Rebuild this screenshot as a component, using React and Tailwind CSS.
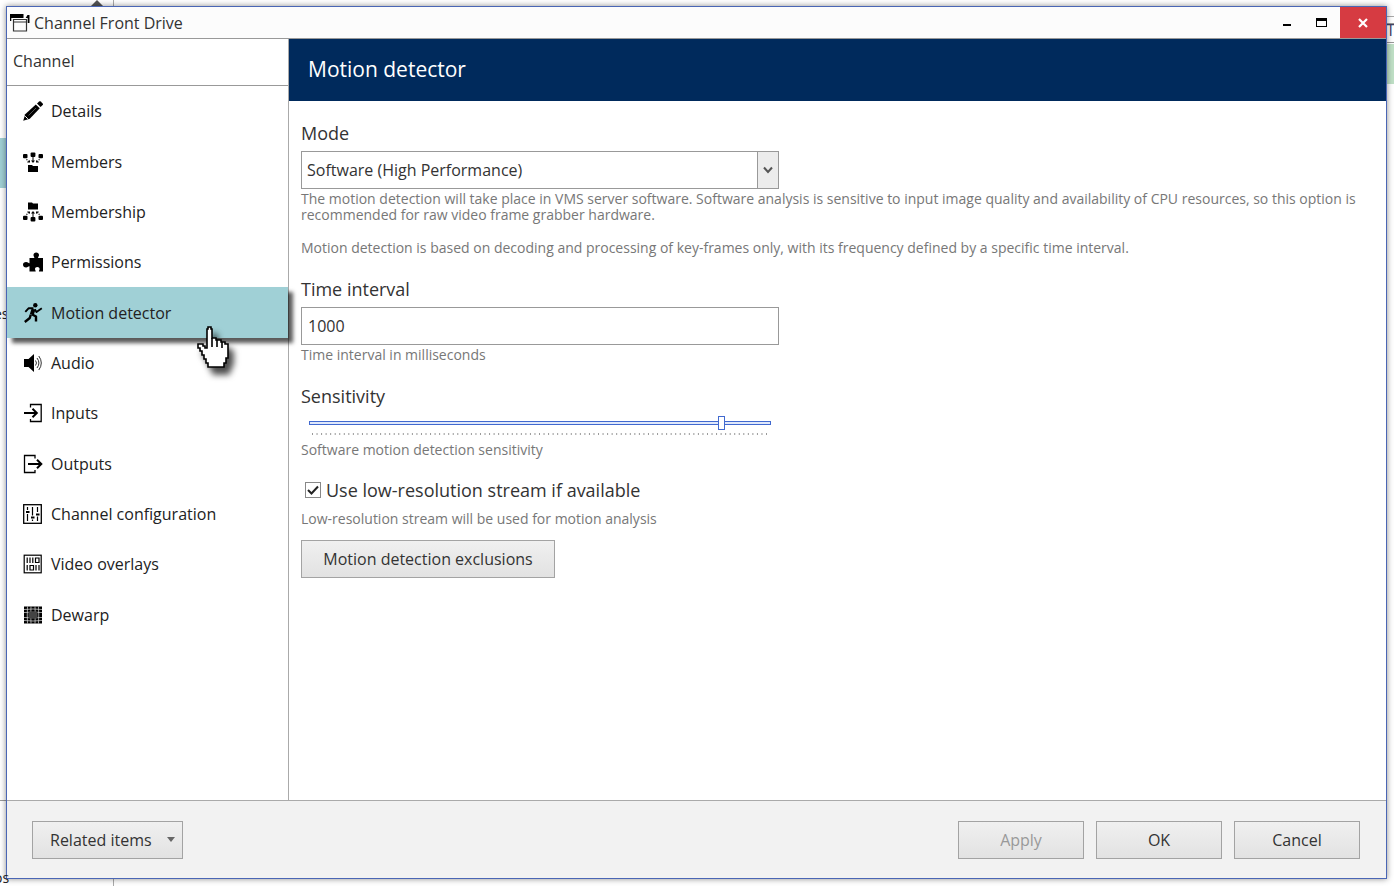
import React, { useState } from 'react';

const Svg = ({ children }) => (
  <svg viewBox="0 0 20 20" className="h-5 w-5 shrink-0" fill="currentColor" aria-hidden="true">
    {children}
  </svg>
);

const PencilIcon = () => (
  <Svg>
    <path d="M14 2.600 16.200.5c.5-.4 1-.4 1.500 0l2 2c.4.5.4 1 0 1.500l-2.200 2.100z" />
    <path d="M12.800 3.400 16.800 7.200 6.800 17.800.2 19.800 2.200 13.200z" />
    <path d="M2.200 15.200 4.800 17.800" stroke="#fff" strokeWidth="1" />
    <path d="M5.500 14.500 13 7" stroke="#666" strokeWidth="0.800" />
  </Svg>
);

const TreeIcon = ({ flip }) => (
  <Svg>
    <g transform={flip ? 'matrix(1 0 0 -1 0 20)' : undefined}>
      <rect x="0" y="2" width="4.500" height="4.300" rx="1" />
      <rect x="7.600" y="0.500" width="4.800" height="4.500" rx="1" />
      <rect x="15.500" y="2" width="4.500" height="4.300" rx="1" />
      <path d="M10 5v4" stroke="currentColor" strokeWidth="1" />
      <path d="M3.500 7.300l2 2.200M16.500 7.300l-2 2.200" stroke="currentColor" strokeWidth="1.200" strokeDasharray="1.200 0.800" />
      <path d="M8 8.500h4l-2 2.600zM4 10.500h3V8zM16 10.500h-3V8z" />
    </g>
    {flip ? <path d="M5 0.500h4l1 1H15v6H5z" /> : <path d="M5 13h4l1 1H15v6H5z" />}
  </Svg>
);

const PuzzleIcon = () => (
  <Svg>
    <path d="M6.500 6h4.800c.3-.9-.8-1.400-.8-3 0-1.400 1-2.500 2.700-2.500S16 1.600 16 3c0 1.600-1.200 2.100-.9 3H20v13.500h-4c-.4-1 .6-1.500.6-2.600 0-1.200-.9-2-2.300-2s-2.300.8-2.300 2c0 1.100 1 1.600.6 2.600H6.500v-5.200c-1-.3-1.500 1.100-3.400 1.100C1.200 15.400 0 14.300 0 12.700s1.200-2.600 3.100-2.600c1.900 0 2.400 1.400 3.400 1.100z" />
  </Svg>
);

const RunnerIcon = () => (
  <Svg>
    <circle cx="12.300" cy="2.300" r="2.200" />
    <g fill="none" stroke="currentColor" strokeLinejoin="round">
      <path d="M10.500 6.200 8.800 11.500" strokeWidth="4" />
      <path d="M10.500 5.300H5.500L2.300 8.800" strokeWidth="1.900" />
      <path d="M11.800 6.200 13.500 9 18.800 5.200" strokeWidth="1.900" />
      <path d="M8.800 11.200 13 13.500 13 18.500" strokeWidth="2.400" />
      <path d="M7.800 11.500 6.800 15 1.800 19" strokeWidth="2.400" />
    </g>
  </Svg>
);

const AudioIcon = () => (
  <Svg>
    <path d="M1 6h4.500L11 1v18l-5.500-5H1z" />
    <path
      d="M12.500 7.500q2 2.500 0 5M14 5q3.800 5 0 10M15.800 3q5 7 0 14"
      fill="none"
      stroke="currentColor"
      strokeWidth="1"
      opacity="0.800"
    />
  </Svg>
);

const InputIcon = () => (
  <Svg>
    <path d="M7.500 4.500V1.500h10.700v17H7.500v-2.500" fill="none" stroke="currentColor" strokeWidth="1.300" />
    <path d="M1 10h12M9.500 5.800l4.300 4.200-4.300 4.200" fill="none" stroke="currentColor" strokeWidth="2" />
  </Svg>
);

const OutputIcon = () => (
  <Svg>
    <path d="M12 4.500V1.500H1.500v17H12v-2.500" fill="none" stroke="currentColor" strokeWidth="1.300" />
    <path d="M5 10h12.500M14 5.800l4.300 4.200-4.300 4.200" fill="none" stroke="currentColor" strokeWidth="2" />
  </Svg>
);

const SlidersIcon = () => (
  <Svg>
    <rect x="0.700" y="0.700" width="17.600" height="18.600" fill="none" stroke="currentColor" strokeWidth="1.300" />
    <path d="M4.500 3v3M4.500 10v7M9.500 3v8.500M9.500 15.500v1.500M14.500 3v5M14.500 12.500v4.500" stroke="currentColor" strokeWidth="1.200" />
    <path d="M3 7h3.500v2H3zM8 12.500h3.500v2H8zM13 9.500h3.500v2H13z" />
  </Svg>
);

const OverlayIcon = () => (
  <Svg>
    <rect x="1.200" y="1.200" width="17" height="17.600" fill="none" stroke="currentColor" strokeWidth="1.200" />
    <path
      d="M4.200 3.500v5.500M7 3.500v5.500M9.800 3.500v5.500M12.500 4h3.500v4.500h-3.500zM4.200 11v5.500M7 11.500h3.500V16H7zM13 11v5.500M16 11v5.500"
      fill="none"
      stroke="currentColor"
      strokeWidth="1.200"
    />
  </Svg>
);

const DewarpIcon = () => (
  <Svg>
    <rect x="1" y="1.500" width="18" height="17" />
    <path
      d="M1 4.500q9-1 18 0M1 7.500q9-.5 18 0M1 12.500q9 .5 18 0M1 15.500q9 1 18 0M4.500 1.500q-.5 8.500 0 17M8 1.500q-.5 8.500 0 17M12 1.500q.5 8.500 0 17M15.500 1.500q.5 8.500 0 17"
      fill="none"
      stroke="#ddd"
      strokeWidth="0.700"
    />
    <rect x="5.500" y="6.500" width="9" height="7" fill="#444" />
  </Svg>
);

const WindowIcon = () => (
  <svg viewBox="0 0 20 18" className="h-[18px] w-5 shrink-0" aria-hidden="true">
    <path d="M0 0h13.500v4H1.300v3H0zM17.500 1h2v8h-1.800V4h-2z" />
    <path d="M3.500 5.500h13V17h-13zM3.500 8h13" fill="none" stroke="#333" strokeWidth="1.200" />
  </svg>
);

const HandCursor = () => (
  <svg
    viewBox="0 0 34 44"
    className="pointer-events-none absolute top-[38px] left-[190px] z-20 h-11 w-[34px] drop-shadow-[5px_7px_3px_rgba(0,0,0,0.7)]"
    aria-hidden="true"
  >
    <path
      d="M11 2h3v2h1v9h4v2h5v2h4v2h3v14h-2v5h-2v4H11v-4H9v-4H7v-4H5v-4H3v-3H1v-4h5v2h2v2h2V4h1z"
      fill="#fff"
      stroke="#000"
      strokeWidth="1.600"
    />
    <path d="M15 13v9M20 15v7M25 17v6" stroke="#000" strokeWidth="1.600" />
  </svg>
);

const navItems = [
  { label: 'Details', icon: <PencilIcon /> },
  { label: 'Members', icon: <TreeIcon /> },
  { label: 'Membership', icon: <TreeIcon flip /> },
  { label: 'Permissions', icon: <PuzzleIcon /> },
  { label: 'Motion detector', icon: <RunnerIcon /> },
  { label: 'Audio', icon: <AudioIcon /> },
  { label: 'Inputs', icon: <InputIcon /> },
  { label: 'Outputs', icon: <OutputIcon /> },
  { label: 'Channel configuration', icon: <SlidersIcon /> },
  { label: 'Video overlays', icon: <OverlayIcon /> },
  { label: 'Dewarp', icon: <DewarpIcon /> },
];

const ticks = Array.from({ length: 101 }, (_, i) => i);

const buttonStyle =
  'h-[38px] border border-[#a3a3a3] bg-linear-to-b from-[#f0f0f0] to-[#e2e2e2] text-base text-[#333]';

const Hint = ({ children }) => <p className="text-sm leading-4 text-[#777]">{children}</p>;

const Backdrop = () => (
  <div className="absolute inset-0 overflow-hidden text-base text-[#222]" aria-hidden="true">
    <div className="absolute top-0 left-[113px] h-full w-px bg-[#aaa]" />
    <svg viewBox="0 0 12 6" className="absolute top-0 left-[91px] h-1.5 w-3">
      <path d="M6 0l6 6H0z" fill="#555" />
    </svg>
    <div className="absolute top-[138px] left-0 h-[50px] w-3 bg-[#9fcfd4]" />
    <div className="absolute top-[304px] left-[-6px] text-sm">es</div>
    <div className="absolute top-[800px] left-0 h-px w-3 bg-[#999]" />
    <div className="absolute top-4 right-0 h-px w-3 bg-[#aaa]" />
    <div className="absolute top-[23px] right-0 h-5 w-2 border-y border-[#999]" />
    <div className="absolute top-[18px] right-[-1px] text-base text-[#446]">T</div>
    <div className="absolute top-[44px] right-0 h-10 w-2 bg-[#bfe0c6]" />
  </div>
);

const App = () => {
  const [active, setActive] = useState('Motion detector');
  const [mode, setMode] = useState('Software (High Performance)');
  const [interval, setIntervalValue] = useState('1000');
  const [sensitivity, setSensitivity] = useState(90);
  const [lowRes, setLowRes] = useState(true);

  return (
    <div className="relative flex min-h-screen flex-col bg-white pt-[6px] pr-[7px] pb-[7px] pl-[6px] font-['Open_Sans',sans-serif] text-[#333]">
      <Backdrop />
      <div className="relative flex flex-1 flex-col border border-[#4a66b5] bg-white shadow-[0_0_6px_rgba(0,0,0,0.45)]">
        <header className="flex h-8 items-center border-b border-[#999] bg-[#fcfcfc] pl-[3px]">
          <WindowIcon />
          <h1 className="ml-1 flex-1 text-base">Channel Front Drive</h1>
          <button aria-label="Minimize" className="flex h-full w-[34px] items-center justify-center">
            <span className="mt-1 h-[2px] w-2 bg-black" />
          </button>
          <button aria-label="Maximize" className="flex h-full w-[34px] items-center justify-center">
            <span className="h-[9px] w-[11px] border border-t-[3px] border-black" />
          </button>
          <button aria-label="Close" className="ml-[2px] flex h-full w-[46px] items-center justify-center bg-[#d63b42]">
            <svg viewBox="0 0 10 10" className="h-2.5 w-2.5">
              <path d="M1 1l8 8M9 1L1 9" stroke="#fff" strokeWidth="2.200" />
            </svg>
          </button>
        </header>

        <div className="flex flex-1">
          <aside className="relative z-10 w-[282px] shrink-0 border-r border-[#aaa]">
            <h2 className="h-[47px] border-b border-[#999] pt-[10px] pl-[6px] text-base">Channel</h2>
            <nav className="grid h-[554px] auto-rows-fr">
              {navItems.map((item) => (
                <button
                  key={item.label}
                  onClick={() => setActive(item.label)}
                  className={`relative flex items-center gap-2 pl-4 text-left text-base text-[#222] ${
                    active === item.label ? 'z-10 bg-[#a0d0d6] shadow-[5px_5px_4px_rgba(0,0,0,0.65)]' : ''
                  }`}
                >
                  <span className="text-black">{item.icon}</span>
                  {item.label}
                  {item.label === 'Motion detector' && <HandCursor />}
                </button>
              ))}
            </nav>
          </aside>

          <main className="min-w-0 flex-1">
            <h2 className="flex h-[62px] items-center bg-[#002a5c] pl-[19px] text-[21px] text-white">Motion detector</h2>
            <div className="pt-5 pr-6 pl-3">
              <label htmlFor="mode" className="block text-lg leading-6">
                Mode
              </label>
              <div className="relative mt-[6px] w-[478px]">
                <select
                  id="mode"
                  value={mode}
                  onChange={(e) => setMode(e.target.value)}
                  className="h-[38px] w-full appearance-none border border-[#999] bg-white px-[5px] text-base outline-none"
                >
                  <option>Software (High Performance)</option>
                </select>
                <span className="pointer-events-none absolute inset-y-0 right-0 flex w-[22px] items-center justify-center border border-[#999] bg-[#ececec]">
                  <svg viewBox="0 0 10 8" className="h-2 w-2.5">
                    <path d="M1 1.500l4 4.500 4-4.500" fill="none" stroke="#555" strokeWidth="2" />
                  </svg>
                </span>
              </div>
              <div className="mt-[2px] space-y-[17px]">
                <Hint>
                  The motion detection will take place in VMS server software. Software analysis is sensitive to input
                  image quality and availability of CPU resources, so this option is recommended for raw video frame
                  grabber hardware.
                </Hint>
                <Hint>
                  Motion detection is based on decoding and processing of key-frames only, with its frequency defined by
                  a specific time interval.
                </Hint>
              </div>

              <label htmlFor="interval" className="mt-[21px] block text-lg leading-6">
                Time interval
              </label>
              <input
                id="interval"
                type="text"
                value={interval}
                onChange={(e) => setIntervalValue(e.target.value)}
                className="mt-[6px] mb-[2px] block h-[38px] w-[478px] border border-[#999] bg-white px-[6px] text-base outline-none"
              />
              <Hint>Time interval in milliseconds</Hint>

              <label htmlFor="sensitivity" className="mt-[21px] block text-lg leading-6">
                Sensitivity
              </label>
              <div className="mt-2 w-[478px] px-2">
                <input
                  id="sensitivity"
                  type="range"
                  value={sensitivity}
                  onChange={(e) => setSensitivity(Number(e.target.value))}
                  className="block h-[14px] w-full appearance-none bg-transparent outline-none [&::-webkit-slider-runnable-track]:h-1 [&::-webkit-slider-runnable-track]:border [&::-webkit-slider-runnable-track]:border-[#4169cf] [&::-webkit-slider-runnable-track]:bg-[#dfe8fb] [&::-webkit-slider-thumb]:mt-[-6px] [&::-webkit-slider-thumb]:h-[14px] [&::-webkit-slider-thumb]:w-[7px] [&::-webkit-slider-thumb]:appearance-none [&::-webkit-slider-thumb]:border [&::-webkit-slider-thumb]:border-[#4169cf] [&::-webkit-slider-thumb]:bg-white"
                />
                <svg className="mx-[3px] mt-[3px] block h-[2px] w-[454px] overflow-visible" aria-hidden="true">
                  {ticks.map((i) => (
                    <rect key={i} x={`${i}%`} y="0" width="1" height="2" fill="#999" />
                  ))}
                </svg>
              </div>
              <div className="mt-[7px]">
                <Hint>Software motion detection sensitivity</Hint>
              </div>

              <label className="mt-5 mb-[9px] flex items-center gap-[5px] pl-1 text-lg leading-6">
                <span className="relative flex h-4 w-4">
                  <input
                    type="checkbox"
                    checked={lowRes}
                    onChange={(e) => setLowRes(e.target.checked)}
                    className="h-4 w-4 appearance-none border border-[#888] bg-white"
                  />
                  {lowRes && (
                    <svg viewBox="0 0 16 16" className="pointer-events-none absolute inset-0 h-4 w-4">
                      <path d="M3 8l3.500 3.500L13 4.500" fill="none" stroke="#222" strokeWidth="2" />
                    </svg>
                  )}
                </span>
                Use low-resolution stream if available
              </label>
              <Hint>Low-resolution stream will be used for motion analysis</Hint>
              <button className={`${buttonStyle} mt-[13px] w-[254px]`}>Motion detection exclusions</button>
            </div>
          </main>
        </div>

        <footer className="flex h-[78px] items-center gap-3 border-t border-[#aaa] bg-[#f2f2f2] pr-[26px] pl-[25px]">
          <button className={`${buttonStyle} mr-auto flex w-[151px] items-center justify-between pr-[7px] pl-[17px]`}>
            Related items
            <svg viewBox="0 0 8 5" className="h-[5px] w-2">
              <path d="M0 0h8L4 5z" fill="#666" />
            </svg>
          </button>
          <button disabled className={`${buttonStyle} w-[126px] disabled:text-[#999]`}>
            Apply
          </button>
          <button className={`${buttonStyle} w-[126px]`}>OK</button>
          <button className={`${buttonStyle} w-[126px]`}>Cancel</button>
        </footer>
      </div>
      <div className="absolute bottom-[-2px] left-[-6px] text-sm leading-5 text-[#222]" aria-hidden="true">
        os
      </div>
    </div>
  );
};

export default App;
